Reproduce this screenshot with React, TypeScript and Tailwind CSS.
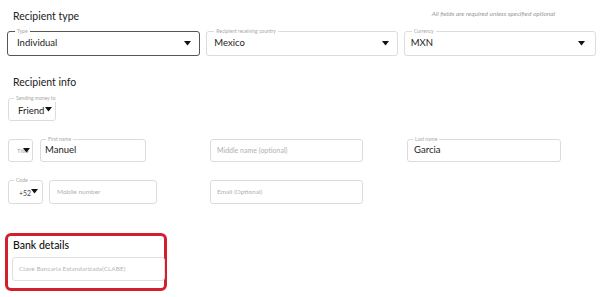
import React from "react";

const Arrow = ({ className = "" }: { className?: string }) => (
  <svg width="7" height="5" viewBox="0 0 7 5" className={`shrink-0 ${className}`}>
    <path d="M0 0 L7 0 L3.5 4.5 Z" fill="#111" />
  </svg>
);

const Label = ({ children, left = "left-[7px]" }: { children: React.ReactNode; left?: string }) => (
  <span className={`absolute -top-[4px] ${left} whitespace-nowrap bg-white px-[2px] text-[5px] leading-[7px] text-[#a8a8a8]`}>
    {children}
  </span>
);

export default function App() {
  return (
    <div
      className="w-[600px] h-[297px] bg-white overflow-hidden text-[#222]"
      style={{ fontFamily: "Lato, 'Open Sans', sans-serif" }}
    >
      <div className="pl-[7px] pr-[4px] pt-[9px]">
        <div className="flex items-center justify-between h-[14px]">
          <h2 className="ml-[6px] text-[10.5px] leading-[14px] font-normal text-[#222]">Recipient type</h2>
          <p className="mr-[41px] text-[6.5px] italic text-[#999] -mt-[4px]">
            All fields are required unless specified optional
          </p>
        </div>

        <div className="mt-[8px] flex gap-[6px]">
          <div className="relative w-[194px] h-[25px] rounded-[3px] border border-[#555] flex items-center justify-between pl-[9px] pr-[8px]">
            <Label>Type</Label>
            <span className="text-[9.5px] text-[#222]">Individual</span>
            <Arrow />
          </div>
          <div className="relative w-[192px] h-[25px] rounded-[3px] border border-[#dcdcdc] flex items-center justify-between pl-[7px] pr-[8px]">
            <Label>Recipient receiving country</Label>
            <span className="text-[9.5px] text-[#222]">Mexico</span>
            <Arrow />
          </div>
          <div className="relative w-[193px] h-[25px] rounded-[3px] border border-[#dcdcdc] flex items-center justify-between pl-[6px] pr-[10px]">
            <Label>Currency</Label>
            <span className="text-[9.5px] text-[#222]">MXN</span>
            <Arrow />
          </div>
        </div>

        <h2 className="mt-[19px] ml-[6px] text-[10.5px] leading-[14px] font-normal text-[#222]">Recipient info</h2>

        <div className="mt-[9px] ml-[1px] relative w-[48px] h-[23px] rounded-[3px] border border-[#dcdcdc] flex items-center pl-[9px] pt-[3px]">
          <Label left="left-[5px]">Sending money to</Label>
          <span className="text-[9.5px] text-[#222]">Friend</span>
          <Arrow className="ml-[1px] -mt-[4px]" />
        </div>

        <div className="mt-[18px] ml-[1px] flex">
          <div className="w-[25px] h-[23px] rounded-[3px] border border-[#dcdcdc] flex items-center pl-[8px] overflow-hidden">
            <span className="text-[6px] text-[#a0a0a0] whitespace-nowrap">Title</span>
            <Arrow className="-ml-[6px] relative" />
          </div>
          <div className="relative ml-[7px] w-[106px] h-[23px] rounded-[3px] border border-[#dcdcdc] flex items-center pl-[4px]">
            <Label left="left-[5px]">First name</Label>
            <span className="text-[9.5px] text-[#222]">Manuel</span>
          </div>
          <div className="ml-[64px] w-[153px] h-[23px] rounded-[3px] border border-[#dcdcdc] flex items-center pl-[6px]">
            <span className="text-[7px] text-[#b0b0b0]">Middle name (optional)</span>
          </div>
          <div className="relative ml-[44px] w-[154px] h-[23px] rounded-[3px] border border-[#dcdcdc] flex items-center pl-[6px]">
            <Label left="left-[5px]">Last name</Label>
            <span className="text-[9.5px] text-[#222]">Garcia</span>
          </div>
        </div>

        <div className="mt-[18px] ml-[1px] flex">
          <div className="relative w-[35px] h-[24px] rounded-[3px] border border-[#dcdcdc] flex items-center pl-[10px] pt-[3px]">
            <Label left="left-[5px]">Code</Label>
            <span className="text-[7px] text-[#444]">+52</span>
            <Arrow className="-mt-[4px]" />
          </div>
          <div className="ml-[6px] w-[108px] h-[24px] rounded-[3px] border border-[#dcdcdc] flex items-center pl-[7px]">
            <span className="text-[6.5px] text-[#b0b0b0]">Mobile number</span>
          </div>
          <div className="ml-[53px] w-[153px] h-[24px] rounded-[3px] border border-[#dcdcdc] flex items-center pl-[6px]">
            <span className="text-[6.5px] text-[#b0b0b0]">Email (Optional)</span>
          </div>
        </div>

        <div className="mt-[29px] -ml-[2px] w-[162px] h-[58px] rounded-[6px] border-[3px] border-[#d21f2c] pt-[2px] pl-[5px]">
          <h2 className="text-[10.5px] leading-[14px] font-medium text-[#111]">Bank details</h2>
          <div className="mt-[5px] -ml-[1px] w-[153px] h-[24px] rounded-[3px] border border-[#e0e0e0] flex items-center pl-[6px]">
            <span className="text-[6.5px] text-[#b8b8b8]">Clave Bancaria Estandarizada(CLABE)</span>
          </div>
        </div>
      </div>
    </div>
  );
}
